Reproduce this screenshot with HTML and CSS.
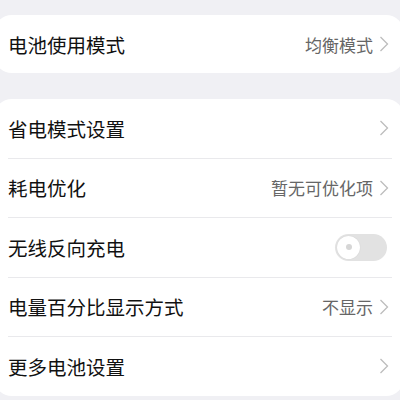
FILE: index.html
```html
<!DOCTYPE html>
<html lang="zh-CN">
<head>
  <meta charset="UTF-8" />
  <meta name="viewport" content="width=device-width, initial-scale=1.0"/>
  <title>电池</title>
  <link rel="stylesheet" href="styles.css">
</head>
<body>
  <div class="card card-top">
    <div class="row">
      <span class="label">电池使用模式</span>
      <span class="value">均衡模式</span>
      <svg class="chevron" viewBox="0 0 10 16"><polyline points="1.5,1 8.5,8 1.5,15"/></svg>
    </div>
  </div>

  <div class="card">
    <div class="row">
      <span class="label">省电模式设置</span>
      <svg class="chevron" viewBox="0 0 10 16"><polyline points="1.5,1 8.5,8 1.5,15"/></svg>
    </div>
    <div class="row">
      <span class="label">耗电优化</span>
      <span class="value">暂无可优化项</span>
      <svg class="chevron" viewBox="0 0 10 16"><polyline points="1.5,1 8.5,8 1.5,15"/></svg>
    </div>
    <div class="row">
      <span class="label">无线反向充电</span>
      <span class="switch"><span class="knob"></span></span>
    </div>
    <div class="row">
      <span class="label">电量百分比显示方式</span>
      <span class="value">不显示</span>
      <svg class="chevron" viewBox="0 0 10 16"><polyline points="1.5,1 8.5,8 1.5,15"/></svg>
    </div>
    <div class="row">
      <span class="label">更多电池设置</span>
      <svg class="chevron" viewBox="0 0 10 16"><polyline points="1.5,1 8.5,8 1.5,15"/></svg>
    </div>
  </div>
</body>
</html>
```

FILE: styles.css
```css
body {
  margin: 0;
  padding: 15px 0 0;
  background-color: #f0f0f4;
  font-family: 'Noto Sans CJK SC', 'Noto Sans', sans-serif;
  color: #111;
  overflow: hidden;
}
.card {
  background: #fff;
  border-radius: 18px;
  margin: 0 -4px 0 -6px;
  padding: 0 12px 0 14px;
}
.card-top {
  margin-bottom: 26px;
}
.row {
  display: flex;
  align-items: center;
  height: 58.5px;
  border-top: 1px solid #e9e9ec;
}
.card-top .row {
  height: 58px;
}
.row:first-child {
  border-top: none;
}
.label {
  flex: 1;
  font-size: 19.5px;
}
.value {
  font-size: 17px;
  color: #666;
  margin-right: 6px;
}
.chevron {
  width: 10px;
  height: 16px;
  margin-right: 3px;
  fill: none;
  stroke: #bdbdbd;
  stroke-width: 1.3;
}
.switch {
  width: 52px;
  height: 27px;
  border-radius: 14px;
  background: #e2e2e2;
  display: flex;
  align-items: center;
  padding-left: 2px;
  box-sizing: border-box;
  margin-right: 5px;
}
.knob {
  width: 23px;
  height: 23px;
  border-radius: 50%;
  background: #fff;
  box-shadow: 0 0 1px rgba(0, 0, 0, 0.15);
  display: flex;
  align-items: center;
  justify-content: center;
}
.knob::after {
  content: '';
  width: 6px;
  height: 6px;
  border-radius: 50%;
  background: #d6d6d6;
}
```
